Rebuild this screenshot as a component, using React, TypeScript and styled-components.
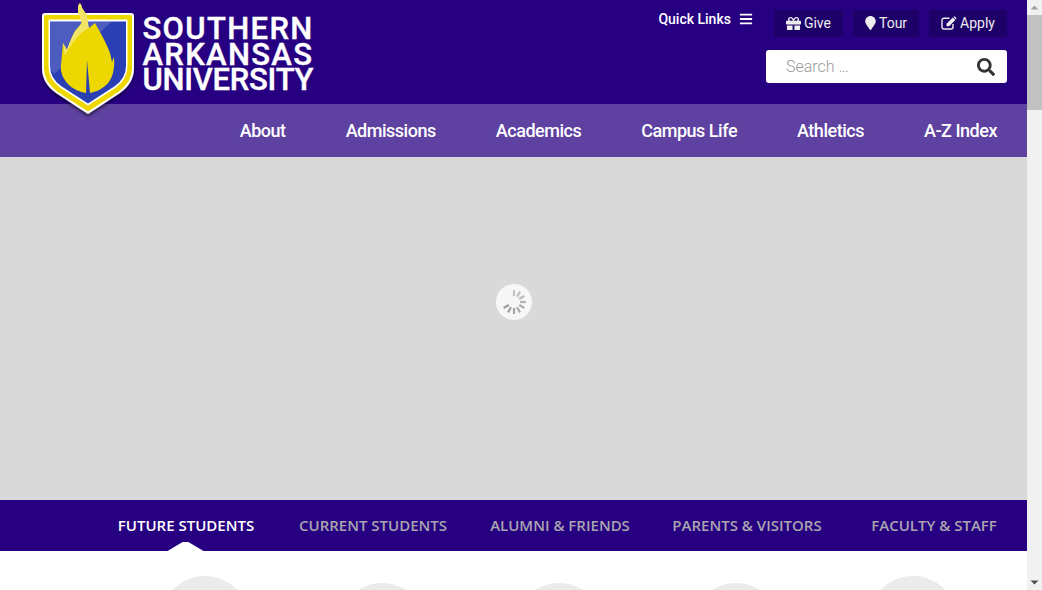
import styled, { createGlobalStyle } from 'styled-components';
import { FaBars, FaGift, FaMapMarker, FaSearch } from 'react-icons/fa';

const GlobalStyle = createGlobalStyle`
  html, body {
    margin: 0;
    padding: 0;
    background: #fff;
    font-family: Roboto, 'Liberation Sans', sans-serif;
  }
`;

const Shell = styled.div`
  display: flex;
  height: 100vh;
  overflow: hidden;
`;

const Page = styled.div`
  flex: 1;
  min-width: 0;
`;

const ScrollBar = styled.div`
  display: flex;
  flex-direction: column;
  align-items: center;
  width: 15px;
  flex: none;
  background: #f1f1f1;
`;

const ScrollArrow = styled.svg`
  width: 15px;
  height: 15px;
  flex: none;
`;

const ScrollThumb = styled.div`
  width: 15px;
  height: 95px;
  margin-bottom: auto;
  background: #c1c1c1;
`;

const Header = styled.header`
  display: flex;
  justify-content: space-between;
  height: 104px;
  padding: 0 20px 0 38px;
  background: #270082;
`;

const Brand = styled.a`
  display: flex;
  align-items: flex-start;
  position: relative;
  z-index: 2;
`;

const Crest = styled.svg`
  width: 100px;
  height: 120px;
  flex: none;
`;

const Wordmark = styled.div`
  margin: 16px 0 0 4.500px;
  font-size: 31px;
  font-weight: 500;
  line-height: 25.500px;
  color: #fff;
  -webkit-text-stroke: 0.4px #fff;
`;

const WordLine = styled.div<{ $spacing: number }>`
  letter-spacing: ${(props) => props.$spacing}px;
  white-space: nowrap;
`;

const Tools = styled.div`
  display: flex;
  flex-direction: column;
  align-items: flex-end;
  padding-top: 10px;
`;

const ToolRow = styled.div`
  display: flex;
  align-items: flex-start;
`;

const QuickLinks = styled.a`
  display: flex;
  align-items: center;
  gap: 8px;
  height: 17px;
  margin-right: 11px;
  font-size: 14px;
  font-weight: 500;
  color: #fff;
`;

const ToolButton = styled.a`
  display: flex;
  align-items: center;
  gap: 3px;
  box-sizing: border-box;
  height: 27px;
  margin-left: 10px;
  padding: 0 12px 1px;
  background: #1d0068;
  font-size: 14px;
  font-weight: 400;
  color: #eee;

  svg {
    flex: none;
  }
`;

const SearchBox = styled.div`
  display: flex;
  align-items: center;
  justify-content: space-between;
  box-sizing: border-box;
  width: 241px;
  height: 33px;
  margin-top: 13px;
  padding: 0 12px 0 20px;
  border-radius: 3px;
  background: #fff;
  color: #333;
`;

const SearchText = styled.span`
  font-size: 16px;
  font-weight: 300;
  color: #999;
`;

const MainNav = styled.nav`
  display: flex;
  justify-content: flex-end;
  height: 53px;
  background: #5e41a0;
`;

const NavLink = styled.a`
  display: flex;
  align-items: center;
  padding: 0 30px;
  font-size: 18px;
  font-weight: 500;
  letter-spacing: -0.48px;
  color: #fff;
`;

const Hero = styled.section`
  display: flex;
  justify-content: center;
  box-sizing: border-box;
  height: 343px;
  padding-top: 127px;
  background: #d9d9d9;
`;

const Loader = styled.svg`
  width: 36px;
  height: 36px;
`;

const Tabs = styled.div`
  display: grid;
  grid-template-columns: repeat(5, 187px);
  box-sizing: border-box;
  height: 51px;
  padding: 0 0 2px 92.500px;
  background: #270082;
`;

const Tab = styled.a<{ $active?: boolean }>`
  display: flex;
  align-items: center;
  justify-content: center;
  position: relative;
  white-space: nowrap;
  font-family: 'Open Sans', sans-serif;
  font-size: 15px;
  font-weight: 600;
  color: ${(props) => (props.$active ? '#fff' : '#a8a6ae')};
`;

const TabMarker = styled.span`
  position: absolute;
  bottom: -2px;
  left: 75px;
  width: 36px;
  height: 9px;
  background: #fff;
  clip-path: polygon(0 100%, 42% 0, 58% 0, 100% 100%);
`;

const Audience = styled.section`
  display: grid;
  grid-template-columns: repeat(5, 177px);
  padding-left: 116px;
  background: #fff;
`;

const AudienceCircle = styled.div<{ $top: number }>`
  width: 90px;
  height: 90px;
  margin: ${(props) => props.$top}px auto 0;
  border-radius: 50%;
  background: #ebebeb;
`;

// spokes of the spinner, the gap is at the top left
const spokes = [0, 30, 60, 90, 120, 150, 180, 210, 240];

const App = (): JSX.Element => (
  <Shell>
    <GlobalStyle />
    <Page>
      <Header>
        <Brand>
          <Crest viewBox="38 0 100 120">
            <defs>
              <filter id="crest-shadow" x="-20%" y="-20%" width="140%" height="140%">
                <feDropShadow dx="0" dy="2.500" stdDeviation="1.800" floodColor="#000" floodOpacity="0.55" />
              </filter>
            </defs>
            <path
              filter="url(#crest-shadow)"
              d="M45 13H131Q134 13 134 16V68Q134 83 120 93L88 114L56 93Q42 83 42 68V16Q42 13 45 13Z"
              fill="#fff"
            />
            <path d="M46 15H130Q132 15 132 17V68Q132 82 119 91.500L88 111.500L57 91.500Q44 82 44 68V17Q44 15 46 15Z" fill="#efd800" />
            <path d="M48.500 19.500H127.500V66Q127.500 79 116 87.500L88 105.500L60 87.500Q48.500 79 48.500 66Z" fill="#fff" />
            <path d="M50 21.500H126V66Q126 78 115 86L88 103.500L61 86Q50 78 50 66Z" fill="#2a3fb3" />
            <path d="M50 21.500H112L54 74Q50 70 50 66Z" fill="#fff" opacity="0.16" />
            <path
              d="M79 4C80 3 81 4 81.500 6C82 10 87 13 87.500 18C88 22 88 25 89 28L95 23C99 30 107 44 110 53L112 62L114 57C115 68 113 80 105 86C100 90 95 92 90 93L87 60L86 93C80 92 73 89 69 85C63 79 60 72 61 65L63 43L67 50C69 44 72 37 74 33C77 28 80 26 81.500 23C82 19 78 16 78 11C78 8 78 6 79 4Z"
              fill="#ecd800"
            />
            <path d="M79 4C80 3 81 4 81.500 6C82 10 87 13 87.500 18C88 22 88 25 89 28C82 31 72 41 65 56L63 43L67 50C69 44 72 37 74 33C77 28 80 26 81.500 23C82 19 78 16 78 11C78 8 78 6 79 4Z" fill="#f3e568" />
          </Crest>
          <Wordmark>
            <WordLine $spacing={1.35}>SOUTHERN</WordLine>
            <WordLine $spacing={1.3}>ARKANSAS</WordLine>
            <WordLine $spacing={-0.25}>UNIVERSITY</WordLine>
          </Wordmark>
        </Brand>
        <Tools>
          <ToolRow>
            <QuickLinks>
              Quick Links <FaBars size={14} />
            </QuickLinks>
            <ToolButton>
              <FaGift size={15} /> Give
            </ToolButton>
            <ToolButton>
              <FaMapMarker size={14} style={{ width: 11 }} /> Tour
            </ToolButton>
            <ToolButton>
              <svg width="16" height="14" viewBox="0 0 16 14" fill="none">
                <path d="M8.500 2.200H3Q1 2.200 1 4.200V11Q1 13 3 13H10Q12 13 12 11V8" stroke="currentColor" strokeWidth="1.400" />
                <path d="M5.500 7.700L11.800 1.400L14.400 4L8.100 10.300H5.500Z" fill="currentColor" />
                <path d="M12.600 0.700Q13.300 0 14 0.700L15.100 1.800Q15.800 2.500 15.100 3.200L14.900 3.400L12.400 0.900Z" fill="currentColor" />
              </svg>{' '}
              Apply
            </ToolButton>
          </ToolRow>
          <SearchBox>
            <SearchText>Search …</SearchText>
            <FaSearch size={18} />
          </SearchBox>
        </Tools>
      </Header>
      <MainNav>
        <NavLink>About</NavLink>
        <NavLink>Admissions</NavLink>
        <NavLink>Academics</NavLink>
        <NavLink>Campus Life</NavLink>
        <NavLink>Athletics</NavLink>
        <NavLink>A-Z Index</NavLink>
      </MainNav>
      <Hero>
        <Loader viewBox="0 0 36 36">
          <circle cx="18" cy="18" r="18" fill="#f7f7f7" />
          {spokes.map((angle, i) => (
            <line
              key={angle}
              x1="18"
              y1="12"
              x2="18"
              y2="6"
              stroke={`rgb(${195 - i * 5}, ${195 - i * 5}, ${195 - i * 5})`}
              strokeWidth="2.200"
              transform={`rotate(${angle} 18 18)`}
            />
          ))}
        </Loader>
      </Hero>
      <Tabs>
        <Tab $active>
          FUTURE STUDENTS
          <TabMarker />
        </Tab>
        <Tab>CURRENT STUDENTS</Tab>
        <Tab>ALUMNI &amp; FRIENDS</Tab>
        <Tab>PARENTS &amp; VISITORS</Tab>
        <Tab>FACULTY &amp; STAFF</Tab>
      </Tabs>
      <Audience>
        <AudienceCircle $top={25} />
        <AudienceCircle $top={32} />
        <AudienceCircle $top={32} />
        <AudienceCircle $top={32} />
        <AudienceCircle $top={25} />
      </Audience>
    </Page>
    <ScrollBar>
      <ScrollArrow viewBox="0 0 15 15">
        <path d="M3.500 9.500L7.500 5.500L11.500 9.500Z" fill="#a3a3a3" />
      </ScrollArrow>
      <ScrollThumb />
      <ScrollArrow viewBox="0 0 15 15">
        <path d="M3.500 5.500L7.500 9.500L11.500 5.500Z" fill="#505050" />
      </ScrollArrow>
    </ScrollBar>
  </Shell>
);

export default App;
